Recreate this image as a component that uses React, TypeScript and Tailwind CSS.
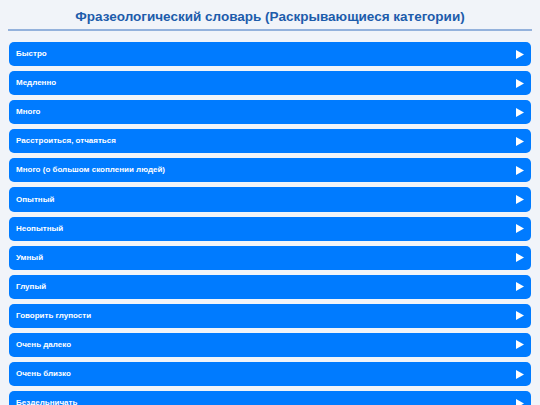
import { useState } from 'react';

const categories: string[] = [
    'Быстро',
    'Медленно',
    'Много',
    'Расстроиться, отчаяться',
    'Много (о большом скоплении людей)',
    'Опытный',
    'Неопытный',
    'Умный',
    'Глупый',
    'Говорить глупости',
    'Очень далеко',
    'Очень близко',
    'Бездельничать',
    'Трудиться',
    'Обмануть',
];

function Arrow({ open }: { open: boolean }) {
    return (
        <svg width="8" height="9" viewBox="0 0 8 9" className={open ? 'rotate-90' : ''}>
            <polygon points="0,0 8,4.5 0,9" fill="#ffffff" />
        </svg>
    );
}

export default function App() {
    const [openIdx, setOpenIdx] = useState<number | null>(null);

    return (
        <div className="min-h-screen bg-[#f1f4f9] px-2 pt-2 font-['Liberation_Sans',Arial,sans-serif]">
            <h1 className="text-center text-[13.5px] leading-[18px] font-bold text-[#1d5cab] pb-[3px] border-b-2 border-[#94b2dc] mb-[11px]">
                Фразеологический словарь (Раскрывающиеся категории)
            </h1>

            <div className="flex flex-col gap-[5px] px-px">
                {categories.map((name, i) => (
                    <div key={name}>
                        <button
                            type="button"
                            onClick={() => setOpenIdx(openIdx === i ? null : i)}
                            className="w-full h-[24.1px] rounded-[5px] bg-[#007bff] px-[7px] flex items-center justify-between text-white text-[8px] font-bold cursor-pointer"
                        >
                            <span>{name}</span>
                            <Arrow open={openIdx === i} />
                        </button>
                    </div>
                ))}
            </div>
        </div>
    );
}
